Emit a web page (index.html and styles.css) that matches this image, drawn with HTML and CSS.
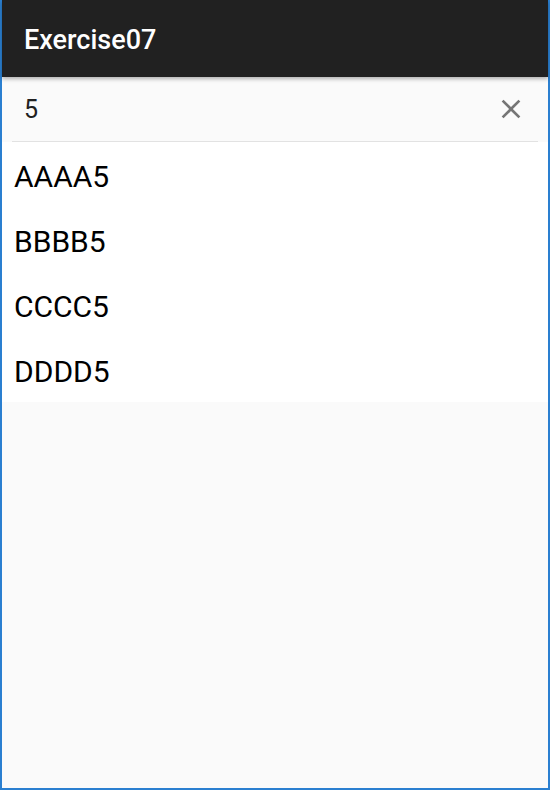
FILE: index.html
```html
<!DOCTYPE html>
<html>
<head>
<meta charset="utf-8">
<link rel="stylesheet" href="styles.css">
</head>
<body>
<div class="window">
  <header class="appbar">
    <h1 class="title">Exercise07</h1>
  </header>
  <div class="search">
    <div class="search-inner">
      <span class="query">5</span>
      <svg class="close" viewBox="0 0 24 24" width="32" height="32"><path d="M19 6.41L17.59 5 12 10.59 6.41 5 5 6.41 10.59 12 5 17.59 6.41 19 12 13.41 17.59 19 19 17.59 13.41 12z" fill="#757575"/></svg>
    </div>
  </div>
  <ul class="list">
    <li class="item">AAAA5</li>
    <li class="item">BBBB5</li>
    <li class="item">CCCC5</li>
    <li class="item">DDDD5</li>
  </ul>
  <div class="rest"></div>
</div>
</body>
</html>
```

FILE: styles.css
```css
html, body {
  margin: 0;
  padding: 0;
  height: 100%;
}
body {
  font-family: Roboto, "Noto Sans", sans-serif;
  background: #fafafa;
}
.window {
  box-sizing: border-box;
  height: 790px;
  border-left: 2px solid #2a7fd0;
  border-right: 2px solid #2a7fd0;
  border-bottom: 2px solid #2a7fd0;
  display: flex;
  flex-direction: column;
  background: #fafafa;
}
.appbar {
  height: 77px;
  background: #212121;
  display: flex;
  align-items: center;
  padding-left: 22px;
  padding-top: 2px;
  box-sizing: border-box;
  box-shadow: 0 2px 4px rgba(0,0,0,0.3);
  position: relative;
  z-index: 1;
  flex: none;
}
.title {
  margin: 0;
  color: #fff;
  font-size: 27px;
  font-weight: 500;
  letter-spacing: 0;
}
.search {
  height: 65px;
  background: #fafafa;
  padding: 0 10px;
  flex: none;
}
.search-inner {
  height: 64px;
  border-bottom: 1px solid #e2e2e2;
  display: flex;
  align-items: center;
  justify-content: space-between;
  padding-left: 12px;
  padding-right: 11px;
}
.query {
  font-size: 25px;
  color: #212121;
}
.close {
  display: block;
}
.list {
  list-style: none;
  margin: 0;
  padding: 0;
  background: #fff;
  flex: none;
}
.item {
  height: 65px;
  box-sizing: border-box;
  padding-top: 3px;
  display: flex;
  align-items: center;
  padding-left: 12px;
  font-size: 30px;
  color: #000;
}
.rest {
  flex: 1;
  background: #fafafa;
}
```
